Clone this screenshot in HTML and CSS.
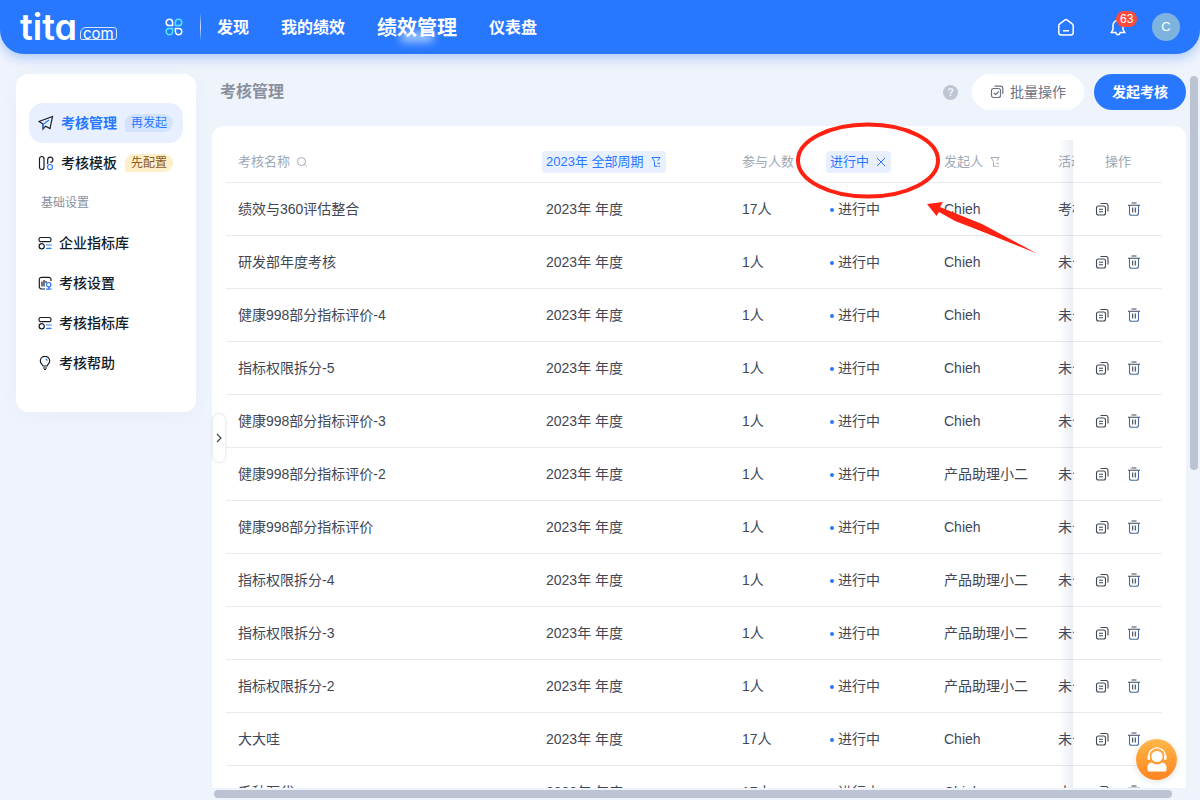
FILE: index.html
```html
<!DOCTYPE html>
<html lang="zh-CN">
<head>
<meta charset="utf-8">
<meta name="viewport" content="width=device-width, initial-scale=1">
<title>考核管理</title>
<link rel="stylesheet" href="styles.css">
</head>
<body>
<svg class="sprite" aria-hidden="true">
  <symbol id="copy" viewBox="0 0 14 14"><rect x="1.5" y="4" width="9" height="9" rx="2"/><path d="M5.500 1.500h5.500a2 2 0 0 1 2 2V9.500M4 7.200h4M4 9.800h4"/></symbol>
  <symbol id="trash" viewBox="0 0 14 14"><path d="M1 3.200h12M4.500 1h5"/><path class="steel" d="M2.500 3.200v8a2 2 0 0 0 2 2h5a2 2 0 0 0 2-2v-8"/><path d="M5.700 5.500v5M8.300 5.500v5"/></symbol>
  <symbol id="filter" viewBox="0 0 10 12"><path d="M1 1.500h8L6.800 4.800M1 1.500l2.500 4v4.800h3M6.300 7.300H9M7.500 10.300H9"/></symbol>
  <symbol id="library" viewBox="0 0 14 14"><rect x="1" y="1.500" width="12" height="4.200" rx="1.800"/><circle cx="3.700" cy="10.200" r="2.600"/><path class="blue" d="M8 9h5.500M8 12.300h5.500"/></symbol>
</svg>

<header class="topbar">
  <a class="logo" href="#"><span class="logo-main">tita</span><span class="logo-com">com</span></a>
  <button class="icon-btn apps" aria-label="应用">
    <svg width="18" height="18" viewBox="0 0 18 18"><path d="M4.400 1.200a3.200 3.200 0 1 0 0 6.400h3.200V4.400a3.200 3.200 0 0 0-3.200-3.200z"/><path class="cyan" d="M13.600 1.200a3.200 3.200 0 1 1 0 6.400h-3.200V4.400a3.200 3.200 0 0 1 3.200-3.200z"/><path class="cyan" d="M4.400 16.800a3.200 3.200 0 1 1 0-6.400h3.200v3.200a3.200 3.200 0 0 1-3.200 3.200z"/><path d="M13.600 16.800a3.200 3.200 0 1 0 0-6.400h-3.200v3.200a3.200 3.200 0 0 0 3.200 3.200z"/></svg>
  </button>
  <span class="divider"></span>
  <nav class="nav">
    <a href="#">发现</a>
    <a href="#">我的绩效</a>
    <a href="#" class="current">绩效管理</a>
    <a href="#">仪表盘</a>
  </nav>
  <div class="tools">
    <button class="icon-btn" aria-label="首页">
      <svg width="18" height="18" viewBox="0 0 18 18"><path d="M1.800 7.800c0-.9.300-1.500 1-2L7.700 2.100a2.100 2.100 0 0 1 2.600 0l4.900 3.700c.7.500 1 1.100 1 2V14.500a2.500 2.500 0 0 1-2.500 2.500H4.300a2.500 2.500 0 0 1-2.500-2.500zM6 12.800h6"/></svg>
    </button>
    <button class="icon-btn" aria-label="通知">
      <svg width="18" height="18" viewBox="0 0 18 18"><path d="M9 2.200a5 5 0 0 0-5 5v4.300l-1.700 3h4.500c.3 1.500 1 2.200 2.200 2.200s1.900-.7 2.200-2.200h4.500l-1.700-3V7.200a5 5 0 0 0-5-5z"/></svg>
      <span class="badge">63</span>
    </button>
    <button class="avatar">C</button>
  </div>
</header>

<div class="body">
  <aside class="sidebar">
    <a href="#" class="item active"><svg class="ico" viewBox="0 0 16 16"><path d="M14.500 1.500 1 6.500l4 2.500v5l2.700-2.800 4.300 2.300z"/><path class="blue" d="M11 5 5 9.500v4"/></svg>考核管理<span class="tag">再发起</span></a>
    <a href="#" class="item"><svg class="ico" viewBox="0 0 16 16"><rect x="1.500" y="1.500" width="4.500" height="13" rx="2.200"/><path d="M9.700 9V4.500a2.600 2.600 0 1 1 2.600 2.800"/><circle class="blue" cx="12" cy="12" r="2.500"/></svg>考核模板<span class="tag warm">先配置</span></a>
    <div class="group">基础设置</div>
    <a href="#" class="item small"><svg class="ico"><use href="#library"/></svg>企业指标库</a>
    <a href="#" class="item small"><svg class="ico" viewBox="0 0 14 14"><path d="M7 13H3.500a2.200 2.200 0 0 1-2.200-2.200v-7.300a2.200 2.200 0 0 1 2.200-2.200h7.300A2.200 2.200 0 0 1 13 3.500V5M4 5.500v5M6 4v6.500M8 5v2"/><path class="blue" d="M8 13.200h5.500M10.700 13V11"/><circle class="blue" cx="10.700" cy="8.700" r="2.200"/></svg>考核设置</a>
    <a href="#" class="item small"><svg class="ico"><use href="#library"/></svg>考核指标库</a>
    <a href="#" class="item small"><svg class="ico" viewBox="0 0 14 14"><path d="M5 10C4.700 8.500 2.300 7.700 2.300 5a4.700 4.700 0 0 1 9.400 0c0 2.700-2.400 3.500-2.700 5zM5 12h4M6 13.500h2"/><path class="blue" d="M7.500 3c1 0 1.700.7 1.700 1.700"/></svg>考核帮助</a>
  </aside>

  <main class="main">
    <div class="heading">
      <h1>考核管理</h1>
      <button class="help" aria-label="帮助">?</button>
      <button class="btn"><svg width="14" height="14" viewBox="0 0 14 14"><rect x="1.500" y="3.500" width="9" height="9" rx="2"/><path d="M4.500 1.200h6a2.300 2.300 0 0 1 2.300 2.300v5.500M3.800 7.800l1.900 1.900 3-3.200"/></svg>批量操作</button>
      <button class="btn primary">发起考核</button>
    </div>

    <section class="card">
      <table>
        <colgroup><col><col class="c-period"><col class="c-count"><col class="c-state"><col class="c-owner"><col class="c-act"><col class="c-op"></colgroup>
        <thead>
          <tr>
            <th>考核名称<svg class="search" viewBox="0 0 12 12"><circle cx="5.500" cy="5.500" r="4"/><path d="M8.500 8.500l2 2"/></svg></th>
            <th><button class="pill">2023年 全部周期<svg class="filter"><use href="#filter"/></svg></button></th>
            <th>参与人数</th>
            <th><button class="pill">进行中<svg class="close" viewBox="0 0 10 10"><path d="M1 1l8 8M9 1l-8 8"/></svg></button></th>
            <th>发起人<svg class="filter"><use href="#filter"/></svg></th>
            <th class="cut">活动</th>
            <th class="ops title">操作</th>
          </tr>
        </thead>
        <tbody>
          <tr><td>绩效与360评估整合</td><td>2023年 年度</td><td>17人</td><td class="state">进行中</td><td>Chieh</td><td class="cut">考核</td><td class="ops"><button aria-label="复制"><svg><use href="#copy"/></svg></button><button aria-label="删除"><svg><use href="#trash"/></svg></button></td></tr>
          <tr><td>研发部年度考核</td><td>2023年 年度</td><td>1人</td><td class="state">进行中</td><td>Chieh</td><td class="cut">未公</td><td class="ops"><button aria-label="复制"><svg><use href="#copy"/></svg></button><button aria-label="删除"><svg><use href="#trash"/></svg></button></td></tr>
          <tr><td>健康998部分指标评价-4</td><td>2023年 年度</td><td>1人</td><td class="state">进行中</td><td>Chieh</td><td class="cut">未公</td><td class="ops"><button aria-label="复制"><svg><use href="#copy"/></svg></button><button aria-label="删除"><svg><use href="#trash"/></svg></button></td></tr>
          <tr><td>指标权限拆分-5</td><td>2023年 年度</td><td>1人</td><td class="state">进行中</td><td>Chieh</td><td class="cut">未公</td><td class="ops"><button aria-label="复制"><svg><use href="#copy"/></svg></button><button aria-label="删除"><svg><use href="#trash"/></svg></button></td></tr>
          <tr><td>健康998部分指标评价-3</td><td>2023年 年度</td><td>1人</td><td class="state">进行中</td><td>Chieh</td><td class="cut">未公</td><td class="ops"><button aria-label="复制"><svg><use href="#copy"/></svg></button><button aria-label="删除"><svg><use href="#trash"/></svg></button></td></tr>
          <tr><td>健康998部分指标评价-2</td><td>2023年 年度</td><td>1人</td><td class="state">进行中</td><td>产品助理小二</td><td class="cut">未公</td><td class="ops"><button aria-label="复制"><svg><use href="#copy"/></svg></button><button aria-label="删除"><svg><use href="#trash"/></svg></button></td></tr>
          <tr><td>健康998部分指标评价</td><td>2023年 年度</td><td>1人</td><td class="state">进行中</td><td>Chieh</td><td class="cut">未公</td><td class="ops"><button aria-label="复制"><svg><use href="#copy"/></svg></button><button aria-label="删除"><svg><use href="#trash"/></svg></button></td></tr>
          <tr><td>指标权限拆分-4</td><td>2023年 年度</td><td>1人</td><td class="state">进行中</td><td>产品助理小二</td><td class="cut">未公</td><td class="ops"><button aria-label="复制"><svg><use href="#copy"/></svg></button><button aria-label="删除"><svg><use href="#trash"/></svg></button></td></tr>
          <tr><td>指标权限拆分-3</td><td>2023年 年度</td><td>1人</td><td class="state">进行中</td><td>产品助理小二</td><td class="cut">未公</td><td class="ops"><button aria-label="复制"><svg><use href="#copy"/></svg></button><button aria-label="删除"><svg><use href="#trash"/></svg></button></td></tr>
          <tr><td>指标权限拆分-2</td><td>2023年 年度</td><td>1人</td><td class="state">进行中</td><td>产品助理小二</td><td class="cut">未公</td><td class="ops"><button aria-label="复制"><svg><use href="#copy"/></svg></button><button aria-label="删除"><svg><use href="#trash"/></svg></button></td></tr>
          <tr><td>大大哇</td><td>2023年 年度</td><td>17人</td><td class="state">进行中</td><td>Chieh</td><td class="cut">未公</td><td class="ops"><button aria-label="复制"><svg><use href="#copy"/></svg></button><button aria-label="删除"><svg><use href="#trash"/></svg></button></td></tr>
          <tr><td>千秋万代</td><td>2023年 年度</td><td>17人</td><td class="state">进行中</td><td>Chieh</td><td class="cut">未公</td><td class="ops"><button aria-label="复制"><svg><use href="#copy"/></svg></button><button aria-label="删除"><svg><use href="#trash"/></svg></button></td></tr>
        </tbody>
      </table>
    </section>
    <div class="hscroll"><span></span></div>

    <button class="collapse" aria-label="收起侧栏"><svg width="6" height="10" viewBox="0 0 6 10"><path d="M1 1l4 4-4 4"/></svg></button>
    <svg class="mark" width="246" height="136" viewBox="0 0 246 136" aria-hidden="true">
      <ellipse cx="73" cy="39.500" rx="70" ry="36"/>
      <path d="M132 83 148 81 145 86 187 103 242 132.500 187 110.500 160 100 144 91 141.500 95z"/>
    </svg>
  </main>
  <div class="vscroll"><span></span></div>
</div>

<button class="service" aria-label="在线客服">
  <svg width="22" height="26" viewBox="0 0 22 26"><circle cx="11" cy="9.500" r="5.600" fill="#fff"/><path d="M2.700 10V9.200a8.300 8.300 0 0 1 16.600 0V10" fill="none" stroke="#fff" stroke-width="1.300"/><rect x="1.500" y="8" width="2.500" height="5" rx="1.200" fill="#fff"/><rect x="18" y="8" width="2.500" height="5" rx="1.200" fill="#fff"/><path d="M6 15.500c1.500 1.300 3 1.800 5 1.800s3.500-.5 5-1.800c3 .4 4.500 2.200 4.500 4.500v2.500c0 1.500-.8 2-2 2h-15c-1.200 0-2-.5-2-2V20c0-2.300 1.500-4.100 4.500-4.500z" fill="#fff"/></svg>
</button>
</body>
</html>
```
FILE: styles.css
```css
* { box-sizing: border-box; }

body {
  margin: 0;
  height: 100vh;
  display: flex;
  flex-direction: column;
  overflow: hidden;
  background: #eff3fb;
  color: #3f4755;
  font: 14px/20px "Liberation Sans", "Noto Sans CJK SC", sans-serif;
}

a { color: inherit; text-decoration: none; }
button { border: 0; padding: 0; background: none; color: inherit; font: inherit; cursor: pointer; }
svg { fill: none; stroke: currentColor; stroke-width: 1.2; flex: none; }
.sprite { position: absolute; width: 0; height: 0; }
.blue { stroke: #2878ff; }
.cyan { stroke: #4ce8ff; }
.steel { stroke: #4a6c9c; }

/* Top bar */
.topbar {
  flex: none;
  height: 54px;
  display: flex;
  align-items: center;
  padding: 0 20px;
  border-radius: 0 0 24px 24px;
  background: #2878ff;
  color: #fff;
  box-shadow: 0 4px 12px #2878ff55;
}
.logo { display: flex; align-items: flex-end; gap: 3px; width: 145px; height: 26px; font-family: Inter, sans-serif; }
.logo-main { font-size: 36px; line-height: 26px; font-weight: 600; font-feature-settings: "cv11"; }
.logo-com { border: 1px solid #ffffffcc; border-radius: 6px 3px 3px 2px; padding: 0 2px; font-size: 15px; line-height: 11px; font-weight: 400; }
.icon-btn { display: flex; position: relative; }
.icon-btn svg { stroke-width: 1.5; }
.divider { width: 1px; height: 28px; margin: 0 16px 0 17px; background: linear-gradient(#fff0, #fffc, #fff0); }
.nav { display: flex; align-items: center; gap: 32px; padding-top: 2px; font-size: 16px; font-weight: 700; white-space: nowrap; }
.current { position: relative; font-size: 20px; }
.current::after {
  content: "";
  position: absolute;
  left: 24px;
  right: 24px;
  bottom: -4px;
  height: 10px;
  background: #fff9;
  filter: blur(4px);
}
.tools { display: flex; align-items: center; margin-left: auto; gap: 34px; }
.tools .avatar { margin-left: -9px; }
.badge {
  position: absolute;
  left: 7px;
  top: -7px;
  padding: 0 4px;
  border-radius: 8px;
  background: #fb4b3e;
  font-size: 12px;
  line-height: 16px;
}
.avatar { width: 28px; height: 28px; border-radius: 50%; background: #7db3de; font-size: 13px; }

/* Page body */
.body { flex: 1; min-height: 0; display: flex; align-items: flex-start; }
.sidebar {
  flex: none;
  width: 180px;
  margin: 20px 16px 0;
  padding: 29px 13px;
  border-radius: 12px;
  background: #fff;
  box-shadow: 0 4px 20px #2f5da80a;
  color: #141c28;
}
.item { display: flex; align-items: center; height: 40px; padding-left: 9px; gap: 7px; border-radius: 14px; font-weight: 500; white-space: nowrap; }
.ico { width: 16px; height: 16px; color: #141c28; }
.small .ico { width: 14px; height: 14px; }
.active { background: #e8f0ff; color: #2878ff; font-weight: 700; }
.tag { margin-left: 1px; padding: 1px 6px 0; border-radius: 9px 9px 9px 2px; background: #d3e3ff; color: #2878ff; font-size: 12px; line-height: 17px; font-weight: 400; }
.tag.warm { background: #ffefc9; color: #8a5a26; }
.group { padding: 1px 0 0 12px; font-size: 12px; line-height: 39px; color: #89919f; }

.main { position: relative; flex: 1; min-width: 0; align-self: stretch; display: flex; flex-direction: column; padding-top: 20px; }
.heading { flex: none; display: flex; align-items: center; height: 36px; margin-bottom: 16px; }
h1 { margin: 0 auto 0 8px; font-size: 16px; color: #89919f; }
.help { width: 15px; height: 15px; margin-right: 14px; border-radius: 50%; background: #bfc5d2; color: #eff3fb; font-size: 11px; line-height: 15px; font-weight: 700; }
.btn { display: flex; align-items: center; gap: 6px; height: 36px; padding: 0 18px; border-radius: 18px; background: #fff; color: #6b7484; }
.btn.primary { margin-left: 10px; background: #2878ff; color: #fff; font-weight: 700; }

.card { flex: 1; min-height: 0; overflow: hidden; padding: 14px 24px 0 14px; border-radius: 12px 12px 0 0; background: #fff; }
table { width: 100%; table-layout: fixed; border-spacing: 0; }
.c-period { width: 196px; }
.c-count { width: 88px; }
.c-state, .c-owner { width: 114px; }
.c-act { width: 28px; }
.c-op { width: 88px; }
th, td { height: 53px; padding: 0 0 0 12px; border-bottom: 1px solid #e7eaee; text-align: left; white-space: nowrap; }
th { height: 43px; padding-top: 1px; color: #a0a8b5; font-size: 13px; font-weight: 400; }
th svg { vertical-align: middle; margin-left: 6px; stroke-width: 1; }
.search { width: 12px; height: 12px; }
.filter { width: 10px; height: 12px; margin-left: 7px; }
.close { width: 10px; height: 10px; margin-left: 7px; }
.pill { height: 22px; padding: 0 5px 0 4px; margin-left: -4px; border-radius: 4px; background: #e8f0ff; color: #2878ff; }
.state::before { content: ""; display: inline-block; width: 4px; height: 4px; margin-right: 4px; border-radius: 50%; background: #2878ff; vertical-align: middle; }
.cut { overflow: hidden; }
.ops { position: sticky; right: 0; padding: 0 0 2px 21px; background: #fff; }
.ops.title { padding: 1px 0 0 31px; }
.ops::before { content: ""; position: absolute; left: -15px; top: 0; bottom: -1px; width: 14px; background: linear-gradient(to left, #5a78b020, #5a78b000); }
.ops button { margin-right: 18px; vertical-align: middle; }
.ops button svg { display: block; width: 14px; height: 14px; stroke-width: 1.1; }

.hscroll { flex: none; height: 12px; padding: 2px 14px 2px 2px; }
.hscroll span, .vscroll span { display: block; border-radius: 4px; background: #bcc4d3; }
.hscroll span { height: 8px; }
.vscroll { flex: none; align-self: stretch; width: 14px; padding: 22px 2px 0 4px; }
.vscroll span { height: 394px; }

/* Elements floating over the content */
.collapse {
  position: absolute;
  left: 1px;
  top: 360px;
  width: 12px;
  height: 48px;
  display: flex;
  align-items: center;
  justify-content: center;
  border-radius: 6px;
  background: #fff;
  box-shadow: 0 0 3px #3f475540;
}
.mark { position: absolute; left: 583px; top: 67px; pointer-events: none; }
.mark ellipse { stroke: #ff2112; stroke-width: 4; }
.mark path { stroke: none; fill: #ff2112; }
.service {
  position: absolute;
  right: 23px;
  bottom: 20px;
  width: 41px;
  height: 41px;
  display: flex;
  align-items: center;
  justify-content: center;
  border-radius: 50%;
  background: linear-gradient(#ffb84a, #ff8420);
  box-shadow: 0 2px 6px #3f475526;
}
.service svg { stroke: none; }
```
